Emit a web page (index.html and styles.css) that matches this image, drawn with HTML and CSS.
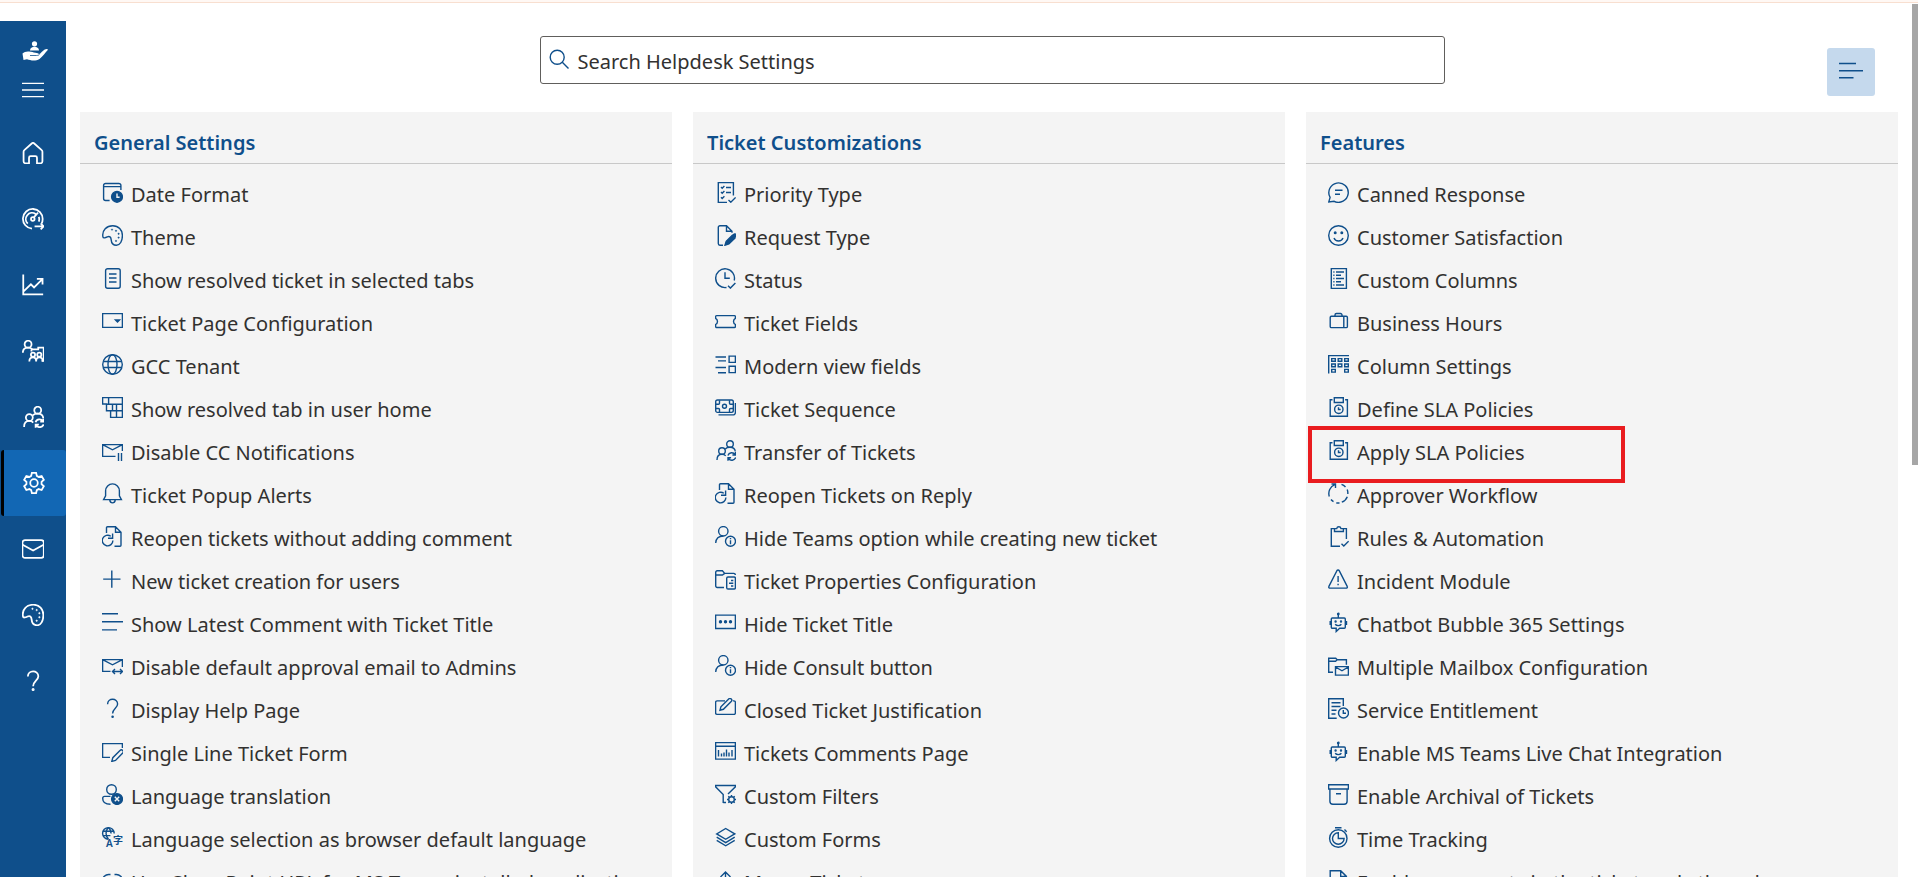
FILE: index.html
```html
<!DOCTYPE html>
<html lang="en">
<head>
<meta charset="utf-8">
<title>Helpdesk Settings</title>
<link rel="stylesheet" href="styles.css">
</head>
<body>
<svg class="sprite" aria-hidden="true">
  <symbol id="date" viewBox="0 0 21 21"><path d="M18.9 8V3.5a2 2 0 0 0-2-2H3.6a2 2 0 0 0-2 2v13a2 2 0 0 0 2 2h4M1.6 4.6h17.3"/><circle class="solid" cx="15" cy="14.8" r="5.4"/><path class="knock" d="M15 11.5v3.7h2.6"/></symbol>
  <symbol id="palette" viewBox="0 0 21 21"><path d="M.9 11.8C-.2 5 4.8.7 10.8.7c5.7 0 9.6 4.3 9.6 9.8 0 5.6-2.4 9.8-6 9.8-3.8 0-5-2.600-5.200-5.400-.2-3-1.700-4-3.900-3-1.800.9-4.100 1.700-4.400-.1z"/><g class="solid dots"><circle cx="10" cy="4.600" r=".7"/><circle cx="14" cy="5.800" r=".7"/><circle cx="16.600" cy="8.800" r=".7"/><circle cx="16.600" cy="12.600" r=".7"/><circle cx="14" cy="15.900" r=".7"/></g></symbol>
  <symbol id="doc" viewBox="0 0 21 21"><rect x="3.600" y=".7" width="14.600" height="19.600" rx="2"/><path d="M7 6h7.500M7 10h7.500M7 14h7.500"/></symbol>
  <symbol id="dropdown" viewBox="0 0 21 21"><path d="M.6 2.600h19.800v13.800H.6z"/><path class="solid" d="M13.500 9h4l-2 2z"/></symbol>
  <symbol id="globe" viewBox="0 0 21 21"><circle cx="10.500" cy="10.500" r="9.800"/><ellipse cx="10.500" cy="10.500" rx="4.500" ry="9.800"/><path d="M1.400 7.500h18.200M1.400 13.500h18.200"/></symbol>
  <symbol id="bricks" viewBox="0 0 21 21"><path d="M.6.6h19.800v19.800H8.600v-6.600H4.500V7H.6zM4.500 7.200h15.900M8.600 13.800h11.800M6.600.6v6.600M10.500 7.200v6.600M14.500 7.200v6.600M14.500 13.800v6.600"/></symbol>
  <symbol id="mailpause" viewBox="0 0 21 21"><path d="M13.500 16.400H.6V4.600h19.800V11M.6 4.600l9.900 5.200 9.900-5.200M16.500 13v8M19.500 13v8"/></symbol>
  <symbol id="bell" viewBox="0 0 21 21"><path d="M1.600 16.600l2-3.800V7.800a6.900 6.900 0 0 1 13.800 0v5l2 3.800zM7.800 17.200c.4 3.500 5 3.500 5.400 0"/></symbol>
  <symbol id="reopen" viewBox="0 0 21 21"><path d="M4.500 7V1.800a1 1 0 0 1 1-1h8l5.500 5.500v12.900a1 1 0 0 1-1 1h-5.500M13.500.8v5.500H19M8.800 10.300a5.300 5.300 0 1 0 2.100 4.200M10.600 7.500v4.800H6"/></symbol>
  <symbol id="plus" viewBox="0 0 21 21"><path d="M9.800 1.500v17.300M1.200 10.100h17.300"/></symbol>
  <symbol id="lines" viewBox="0 0 21 21"><path d="M0 1.700h16M0 9.700h21M0 17.900h15"/></symbol>
  <symbol id="mailswap" viewBox="0 0 21 21"><path d="M8.500 16.400H.6V4.600h19.800V12M.6 4.600l9.900 5.200 9.900-5.200M10.500 16.500h10M13 14l-2.500 2.500L13 19M18 14l2.500 2.500L18 19"/></symbol>
  <symbol id="help" viewBox="0 0 21 21"><path d="M5.600 6.200c0-6.600 10-6.500 10-.2 0 4-5 4.600-5 9.600"/><circle class="solid" cx="10.600" cy="18.700" r=".6"/></symbol>
  <symbol id="formpen" viewBox="0 0 21 21"><path d="M8 16.400H.6V2.600h19.800V7M9.800 20.400l1-3.700 7.200-7.300a1.900 1.900 0 0 1 2.700 2.700l-7.200 7.300z"/></symbol>
  <symbol id="userx" viewBox="0 0 21 21"><circle cx="9.500" cy="5.500" r="4.800"/><path d="M8.500 12.400H2.600c-1.200 0-1.900.8-1.900 2 0 3.300 2.700 5.800 7.800 5.800"/><circle class="solid" cx="15" cy="15" r="5.400"/><path class="knock" d="M12.800 12.800l4.400 4.400M17.200 12.800l-4.400 4.400"/></symbol>
  <symbol id="link" viewBox="0 0 21 21"><path d="M8.500 4.500H6.600a6 6 0 0 0 0 12h1.900M12.500 4.500h1.900a6 6 0 0 1 0 12h-1.900M6 10.500h9"/></symbol>

  <symbol id="checklist" viewBox="0 0 21 21"><path d="M18.400 13.500V.6H3.300v19.800H12M11 5.500h5M11 10.500h5M6 5l1.200 1.200L9.400 4M6 10l1.200 1.200L9.400 9M6 15.200l1.200 1.200 2.200-2.200M13.500 18l2.300 2.200 4.800-4.800"/></symbol>
  <symbol id="docpen" viewBox="0 0 21 21"><path d="M8 20.200H4.900a1.600 1.600 0 0 1-1.600-1.600V2.300A1.600 1.600 0 0 1 4.900.7h6.600l5.500 5.500v1.600M11.500.7v5.500H17"/><path class="solid" d="M10 20.200l1.200-3.900 5.900-5.700 2.700 2.700-5.900 5.700zM18.200 9.800l.6-.5a1.400 1.400 0 0 1 2 2l-.5.600z"/></symbol>
  <symbol id="status" viewBox="0 0 21 21"><path d="M19.200 12.500A9.400 9.400 0 1 0 11.500 19.500M10 4.300v5.900h4.800M13 17.800l2.400 2.300 5-5"/></symbol>
  <symbol id="ticket" viewBox="0 0 21 21"><path d="M1.600 4.600h17.800a1 1 0 0 1 1 1v1.700c-2.500 1.500-2.500 4.700 0 6.200v2a1 1 0 0 1-1 1H1.600a1 1 0 0 1-1-1v-2c2.500-1.500 2.500-4.700 0-6.200V5.600a1 1 0 0 1 1-1z"/></symbol>
  <symbol id="modern" viewBox="0 0 21 21"><path d="M.5 3h10.500M3 6.900h8M.5 13.500h10.500M3 18.800h8M14.100 2.100h6.300v6.300h-6.300zM14.100 12.300h6.300v6.300h-6.300z"/></symbol>
  <symbol id="money" viewBox="0 0 21 21"><rect x=".7" y="3" width="17.600" height="12.400" rx="1.800"/><circle cx="9.500" cy="9.200" r="2"/><path d="M1 7.200h2.500a1 1 0 0 0 1-1V3.300M18 7.200h-2.500a1 1 0 0 1-1-1V3.300M1 11.500h2.500a1 1 0 0 1 1 1v2.800M18 11.500h-2.500a1 1 0 0 0-1 1v2.800M20.400 6v9.500a2.400 2.400 0 0 1-2.400 2.400H3.500"/></symbol>
  <symbol id="transfer" viewBox="0 0 21 21"><circle cx="15" cy="4" r="3.300"/><circle cx="7" cy="11" r="3.300"/><path d="M2 20c0-3.500 2-5.700 5-5.700 1.700 0 2.900.6 3.700 1.600M10.300 9c1-1.200 2.500-1.700 4.700-1.700 3.200 0 5 1.600 5.300 4.200M12.900 15.500a4 4 0 0 1 7.200-.8M20.500 12v3h-3.100M20.700 17.500a4 4 0 0 1-7.200.8M13 20.700v-3h3.100"/></symbol>
  <symbol id="userinfo" viewBox="0 0 21 21"><circle cx="8.300" cy="5.300" r="4.700"/><path d="M.7 17c.3-4.500 3.300-7 7.600-7"/><circle cx="15.500" cy="15.300" r="5"/><path d="M15.500 14.300v4M15.500 12v1.200"/></symbol>
  <symbol id="foldernote" viewBox="0 0 21 21"><path d="M9 18.500H2.200a1.500 1.500 0 0 1-1.500-1.500V3.300a1.500 1.500 0 0 1 1.500-1.500h5.200l2.300 2.600h9a1.500 1.500 0 0 1 1.600 1.500M.7 6h6.700l2.300-1.600"/><rect x="11.700" y="8" width="8.700" height="12" rx="1.300"/><path d="M16 11.500h2.300M14 14.300h4.300M16 17h2.300"/></symbol>
  <symbol id="titledots" viewBox="0 0 21 21"><path d="M.6 3.100h19.800v13.400H.6z"/><g class="solid"><circle cx="5.500" cy="9.800" r="1"/><circle cx="10.500" cy="9.800" r="1"/><circle cx="15.500" cy="9.800" r="1"/></g></symbol>
  <symbol id="closedpen" viewBox="0 0 21 21"><path d="M10 2.900H2.100A1.500 1.500 0 0 0 .6 4.400v10.500a1.500 1.500 0 0 0 1.500 1.500h16.800a1.500 1.500 0 0 0 1.500-1.500V4.400a1.500 1.500 0 0 0-1.500-1.500h-1M5 12.200l.9-3.400L13.700 1a1.700 1.700 0 0 1 2.500 2.500l-7.800 7.800z"/></symbol>
  <symbol id="chartpage" viewBox="0 0 21 21"><path d="M.6 1.600h19.800v16.500H.6zM.6 5.300h19.800M3.500 9v6.500M6.500 12.500v3M9 11.500v4M11.500 8.500v7M14 11.500v4M17 9v6.500"/></symbol>
  <symbol id="filter" viewBox="0 0 21 21"><path d="M8.200 19V10.500L.6 2.800V1.500h19.800v1.300L13 10M8.200 18.500H11"/><circle cx="16.500" cy="15.500" r="2.800"/><path d="M16.500 11v1.700M16.500 18.300V20M12 15.500h1.700M19.300 15.500H21M13.300 12.300l1.200 1.200M18.500 17.500l1.200 1.200M19.700 12.300l-1.200 1.200M14.500 17.500l-1.200 1.200"/></symbol>
  <symbol id="layers" viewBox="0 0 21 21"><path d="M10.700 1.500l9 5.400-9 5.400-9-5.400zM1.700 10.200l9 5.400 9-5.400M1.700 13.400l9 5.400 9-5.400"/></symbol>
  <symbol id="merge" viewBox="0 0 21 21"><path d="M10.500 2v18M5.500 7l5-5 5 5"/></symbol>

  <symbol id="chat" viewBox="0 0 21 21"><path d="M.8 19.900l1.300-4.500A9.700 9.700 0 1 1 6.200 19.300zM7 8.300h7.500M7 12.200h5"/></symbol>
  <symbol id="smile" viewBox="0 0 21 21"><circle cx="10.500" cy="10.500" r="9.800"/><path d="M6 13c1.500 4 7.500 4 9 0"/><circle class="solid" cx="7.200" cy="7.800" r=".8"/><circle class="solid" cx="13.800" cy="7.800" r=".8"/></symbol>
  <symbol id="columns" viewBox="0 0 21 21"><path d="M3.300.6h15.100v19.800H3.300zM8 4h8M8 7.300h5M8 10.500h8M8 13.700h5M8 17h8M5.300 4h1.200M5.300 7.300h1.200M5.300 10.500h1.200M5.300 13.700h1.200M5.300 17h1.200"/></symbol>
  <symbol id="briefcase" viewBox="0 0 21 21"><rect x="2.200" y="5.200" width="17.200" height="11.400" rx="1.200"/><path d="M7 5V4a1.500 1.500 0 0 1 1.500-1.500h4A1.500 1.500 0 0 1 14 4v1M15.800 5.200v11.400"/></symbol>
  <symbol id="colset" viewBox="0 0 21 21"><path d="M.7 19.500V1.600H21M3.700 4.600h3.600v2.700H3.700zM10.200 4.600h3.600v2.700h-3.600zM16.700 4.600h3.600v2.700h-3.600zM3.700 10h3.600v2.700H3.700zM10.200 10h3.600v2.700h-3.600zM16.700 10h3.600v2.700h-3.600zM3.700 15.400h3.600v2.700H3.700zM16.700 15.400h3.600v2.700h-3.600z"/></symbol>
  <symbol id="sla" viewBox="0 0 21 21"><path d="M4.500 2.700H2.200v16.600h17.200V2.700h-2.300M6.300.7h9v4.800h-9z"/><circle cx="10.800" cy="12.300" r="4.200"/><path d="M10.500 10.200v2.300h2.200"/></symbol>
  <symbol id="workflow" viewBox="0 0 21 21"><path d="M1.300 13.500A9.600 9.600 0 0 1 6.700 1.700M3.500 1h4v4M13.500 1.400a9.600 9.600 0 0 1 4 2.600M19.200 6.500a9.600 9.600 0 0 1 .6 4.500M19.300 13.700a9.600 9.600 0 0 1-5.500 5.500M11.500 20H8.300M5.500 18.700A9.600 9.600 0 0 1 3 16.500"/></symbol>
  <symbol id="clipcheck" viewBox="0 0 21 21"><path d="M6 2.600H3.300v17.600H12M16 2.600h2.400V13M6.500 2.600h2.200c.5-2.500 3.800-2.500 4.300 0h2.400v2.900H6.500zM13.500 17.700l2.300 2.300 4.800-4.800"/></symbol>
  <symbol id="warn" viewBox="0 0 21 21"><path d="M8.900 1.700a1.300 1.300 0 0 1 2.300 0l8 15.600a1.200 1.200 0 0 1-1.100 1.800H2a1.200 1.200 0 0 1-1.100-1.800zM10.100 7v6M10.100 14.700v1.500"/></symbol>
  <symbol id="bot" viewBox="0 0 21 21"><path d="M10.300 2v4M4.300 6h12a1 1 0 0 1 1 1v8.300a1 1 0 0 1-1 1h-4.600l-3.500 3.200v-3.200H4.300a1 1 0 0 1-1-1V7a1 1 0 0 1 1-1zM7.200 12.300c1.500 1.800 4.700 1.800 6.200 0M2.200 9v4M18.500 9v4"/><circle class="solid" cx="10.300" cy="2" r=".7"/><circle class="solid" cx="7.600" cy="9.500" r=".5"/><circle class="solid" cx="13" cy="9.500" r=".5"/></symbol>
  <symbol id="foldermail" viewBox="0 0 21 21"><path d="M5 17.300H.7V3.200h7l1.500 1.600h9.200v5M.7 6.200h6.900l1.600-1.400M7.500 11.600h12.900v8.500H7.500zM7.500 12l6.500 3.800 6.400-3.800"/></symbol>
  <symbol id="service" viewBox="0 0 21 21"><path d="M15.300 8V.7H.7v19.600h8M3.500 4.700h9M3.500 8.500h9M3.500 12.300h5M3.500 16h4"/><circle cx="15.500" cy="15" r="5"/><path d="M15.300 12v3.200h2.700"/></symbol>
  <symbol id="archive" viewBox="0 0 21 21"><path d="M.6.700h19.800v4.300H.6zM1.900 5v12.300a3 3 0 0 0 3 3h11.200a3 3 0 0 0 3-3V5M8 9.700h5"/></symbol>
  <symbol id="timer" viewBox="0 0 21 21"><circle cx="10.300" cy="11.500" r="8.700"/><path d="M7 .7h6.500M16.500 2.500l2.200 2.200M10.300 5.700a5.800 5.800 0 1 0 5.800 5.800h-5.800z"/></symbol>
  <symbol id="docfold" viewBox="0 0 21 21"><path d="M2.200 20.400V.7h10.500l5.700 5.700v14zM12.700.7v5.700h5.700"/></symbol>

  <symbol id="home" viewBox="0 0 21 21"><path d="M1.500 9.300a2 2 0 0 1 .7-1.500L9.300 1.400a1.800 1.800 0 0 1 2.400 0l7.100 6.400a2 2 0 0 1 .7 1.500v9a2 2 0 0 1-2 2h-3.200V15a1.500 1.500 0 0 0-1.500-1.500H8.200A1.500 1.500 0 0 0 6.700 15v5.300H3.500a2 2 0 0 1-2-2z"/></symbol>
  <symbol id="gauge" viewBox="0 0 21 21"><path d="M9.500 19.700A9.400 9.400 0 1 1 19.700 10.500a9 9 0 0 1-.9 4.200M5.500 15a6 6 0 0 1 7.500-9.300M16 8.500a6 6 0 0 1 0 4.500M11.300 9l4-4.500"/><circle cx="10.300" cy="10.500" r="1.700"/><path d="M12 17.500h8.500M17.800 14.700l2.800 2.800-2.800 2.800"/></symbol>
  <symbol id="trend" viewBox="0 0 21 21"><path d="M1.200.5v18.900h19M1.500 16.500l7-6.700 3 3 8-8M14.200 4.700h5.400v5.400"/></symbol>
  <symbol id="team" viewBox="0 0 21 21"><circle cx="5.800" cy="4" r="3.300"/><path d="M.8 12.200c0-3.200 2-4.900 5-4.900 1.700 0 3 .5 4 1.500M9 11V9h6.500V7.300h5.200V20h-2"/><circle cx="10.500" cy="14" r="2"/><circle cx="16.500" cy="14" r="2"/><path d="M7 20.500c0-2.700 1.200-4 3.500-4s3 1.500 3 4c0-2.700 1-4 3-4s3.300 1.300 3.300 4"/></symbol>
  <symbol id="gear" viewBox="0 0 21 21"><circle cx="10.500" cy="10.500" r="3.600"/><path d="M8.500.8h4l.7 2.900 1.700 1 2.900-.9 2.100 3.600-2.200 2.100v2l2.200 2.100-2.100 3.600-2.900-.9-1.700 1-.7 2.900h-4l-.7-2.900-1.700-1-2.900.9-2.100-3.600 2.200-2.100v-2L1.100 7.400l2.100-3.600 2.900.9 1.700-1z"/></symbol>
  <symbol id="mail" viewBox="0 0 21 21"><rect x=".4" y="2" width="20.400" height="17" rx="2.500"/><path d="M.6 6.500l10 5.500 10-5.500"/></symbol>
  <symbol id="menu" viewBox="0 0 21 21"><path d="M0 4.200h21M0 10.500h21M0 16.800h21"/></symbol>
  <symbol id="search" viewBox="0 0 21 21"><circle cx="8.200" cy="8.200" r="7"/><path d="M13.300 13.300l6.200 6.200"/></symbol>
  <symbol id="brand" viewBox="0 0 26 20"><g class="solid"><circle cx="12.500" cy="2.800" r="2.600"/><path d="M8 9.500c0-5 9-5 9 0z"/><path d="M.5 12.500c1.500-1.500 4-2.300 6.500-2 3 .2 4 1 6.500 1.200 1.800.2 3.500.6 3.200 1.600 2.300-.8 3.700-3.500 6-4.800 1.500-.8 3-.7 3.300.2-2.800 2.800-5 6.500-8.500 9.300-4 2.500-9 1.500-12.500.3L1.500 19z"/></g><path class="groove" d="M8 14.500h6.500c1.500 0 2.500-.5 3-1"/></symbol>
</svg>

<div class="page">
  <div class="notice"></div>
  <div class="shell">
    <nav class="rail" aria-label="Main">
      <div class="rail-top">
        <svg class="brand"><use href="#brand"/></svg>
        <button class="menu" type="button" aria-label="Menu"><svg class="ic"><use href="#menu"/></svg></button>
      </div>
      <a class="rail-item" href="#" aria-label="Home"><svg class="ic"><use href="#home"/></svg></a>
      <a class="rail-item" href="#" aria-label="Dashboard"><svg class="ic"><use href="#gauge"/></svg></a>
      <a class="rail-item" href="#" aria-label="Reports"><svg class="ic"><use href="#trend"/></svg></a>
      <a class="rail-item" href="#" aria-label="Teams"><svg class="ic"><use href="#team"/></svg></a>
      <a class="rail-item" href="#" aria-label="Users"><svg class="ic"><use href="#transfer"/></svg></a>
      <a class="rail-item active" href="#" aria-label="Settings" aria-current="page"><svg class="ic"><use href="#gear"/></svg></a>
      <a class="rail-item" href="#" aria-label="Email"><svg class="ic"><use href="#mail"/></svg></a>
      <a class="rail-item" href="#" aria-label="Theme"><svg class="ic"><use href="#palette"/></svg></a>
      <a class="rail-item" href="#" aria-label="Help"><svg class="ic"><use href="#help"/></svg></a>
    </nav>

    <main class="main">
      <header class="toolbar">
        <label class="search"><svg class="ic"><use href="#search"/></svg><input type="text" placeholder="Search Helpdesk Settings" aria-label="Search Helpdesk Settings"></label>
        <button class="toggle" type="button" aria-label="Toggle list view"><svg viewBox="0 0 24 17"><path d="M0 1.500h17M0 8.700h24M0 15.700h14.500"/></svg></button>
      </header>

      <div class="columns">
        <section class="card">
          <h2>General Settings</h2>
          <ul>
            <li><a href="#"><svg class="ic"><use href="#date"/></svg>Date Format</a></li>
            <li><a href="#"><svg class="ic"><use href="#palette"/></svg>Theme</a></li>
            <li><a href="#"><svg class="ic"><use href="#doc"/></svg>Show resolved ticket in selected tabs</a></li>
            <li><a href="#"><svg class="ic"><use href="#dropdown"/></svg>Ticket Page Configuration</a></li>
            <li><a href="#"><svg class="ic"><use href="#globe"/></svg>GCC Tenant</a></li>
            <li><a href="#"><svg class="ic"><use href="#bricks"/></svg>Show resolved tab in user home</a></li>
            <li><a href="#"><svg class="ic"><use href="#mailpause"/></svg>Disable CC Notifications</a></li>
            <li><a href="#"><svg class="ic"><use href="#bell"/></svg>Ticket Popup Alerts</a></li>
            <li><a href="#"><svg class="ic"><use href="#reopen"/></svg>Reopen tickets without adding comment</a></li>
            <li><a href="#"><svg class="ic"><use href="#plus"/></svg>New ticket creation for users</a></li>
            <li><a href="#"><svg class="ic"><use href="#lines"/></svg>Show Latest Comment with Ticket Title</a></li>
            <li><a href="#"><svg class="ic"><use href="#mailswap"/></svg>Disable default approval email to Admins</a></li>
            <li><a href="#"><svg class="ic"><use href="#help"/></svg>Display Help Page</a></li>
            <li><a href="#"><svg class="ic"><use href="#formpen"/></svg>Single Line Ticket Form</a></li>
            <li><a href="#"><svg class="ic"><use href="#userx"/></svg>Language translation</a></li>
            <li><a href="#"><svg class="ic" viewBox="0 0 21 21" aria-hidden="true"><path d="M6.500 12.200A5.800 5.800 0 1 1 12.200 6.400M6.500.6c-3.300 3-3.300 8.400 0 11.400M6.500.6c1.700 1.600 2.600 3.600 2.600 5.800M1.400 4.200h10.200M1.400 8.600h7"/><text x="4" y="20">A</text><text x="11" y="17">字</text></svg>Language selection as browser default language</a></li>
            <li><a href="#"><svg class="ic"><use href="#link"/></svg>Use SharePoint URL for MS Teams installed application</a></li>
          </ul>
        </section>

        <section class="card">
          <h2>Ticket Customizations</h2>
          <ul>
            <li><a href="#"><svg class="ic"><use href="#checklist"/></svg>Priority Type</a></li>
            <li><a href="#"><svg class="ic"><use href="#docpen"/></svg>Request Type</a></li>
            <li><a href="#"><svg class="ic"><use href="#status"/></svg>Status</a></li>
            <li><a href="#"><svg class="ic"><use href="#ticket"/></svg>Ticket Fields</a></li>
            <li><a href="#"><svg class="ic"><use href="#modern"/></svg>Modern view fields</a></li>
            <li><a href="#"><svg class="ic"><use href="#money"/></svg>Ticket Sequence</a></li>
            <li><a href="#"><svg class="ic"><use href="#transfer"/></svg>Transfer of Tickets</a></li>
            <li><a href="#"><svg class="ic"><use href="#reopen"/></svg>Reopen Tickets on Reply</a></li>
            <li><a href="#"><svg class="ic"><use href="#userinfo"/></svg>Hide Teams option while creating new ticket</a></li>
            <li><a href="#"><svg class="ic"><use href="#foldernote"/></svg>Ticket Properties Configuration</a></li>
            <li><a href="#"><svg class="ic"><use href="#titledots"/></svg>Hide Ticket Title</a></li>
            <li><a href="#"><svg class="ic"><use href="#userinfo"/></svg>Hide Consult button</a></li>
            <li><a href="#"><svg class="ic"><use href="#closedpen"/></svg>Closed Ticket Justification</a></li>
            <li><a href="#"><svg class="ic"><use href="#chartpage"/></svg>Tickets Comments Page</a></li>
            <li><a href="#"><svg class="ic"><use href="#filter"/></svg>Custom Filters</a></li>
            <li><a href="#"><svg class="ic"><use href="#layers"/></svg>Custom Forms</a></li>
            <li><a href="#"><svg class="ic"><use href="#merge"/></svg>Merge Tickets</a></li>
          </ul>
        </section>

        <section class="card">
          <h2>Features</h2>
          <ul>
            <li><a href="#"><svg class="ic"><use href="#chat"/></svg>Canned Response</a></li>
            <li><a href="#"><svg class="ic"><use href="#smile"/></svg>Customer Satisfaction</a></li>
            <li><a href="#"><svg class="ic"><use href="#columns"/></svg>Custom Columns</a></li>
            <li><a href="#"><svg class="ic"><use href="#briefcase"/></svg>Business Hours</a></li>
            <li><a href="#"><svg class="ic"><use href="#colset"/></svg>Column Settings</a></li>
            <li><a href="#"><svg class="ic"><use href="#sla"/></svg>Define SLA Policies</a></li>
            <li class="marked"><a href="#"><svg class="ic"><use href="#sla"/></svg>Apply SLA Policies</a></li>
            <li><a href="#"><svg class="ic"><use href="#workflow"/></svg>Approver Workflow</a></li>
            <li><a href="#"><svg class="ic"><use href="#clipcheck"/></svg>Rules &amp; Automation</a></li>
            <li><a href="#"><svg class="ic"><use href="#warn"/></svg>Incident Module</a></li>
            <li><a href="#"><svg class="ic"><use href="#bot"/></svg>Chatbot Bubble 365 Settings</a></li>
            <li><a href="#"><svg class="ic"><use href="#foldermail"/></svg>Multiple Mailbox Configuration</a></li>
            <li><a href="#"><svg class="ic"><use href="#service"/></svg>Service Entitlement</a></li>
            <li><a href="#"><svg class="ic"><use href="#bot"/></svg>Enable MS Teams Live Chat Integration</a></li>
            <li><a href="#"><svg class="ic"><use href="#archive"/></svg>Enable Archival of Tickets</a></li>
            <li><a href="#"><svg class="ic"><use href="#timer"/></svg>Time Tracking</a></li>
            <li><a href="#"><svg class="ic"><use href="#docfold"/></svg>Enable comments in the ticket reply thread</a></li>
          </ul>
        </section>
      </div>
      <div class="thumb"></div>
    </main>
  </div>
</div>
</body>
</html>
```
FILE: styles.css
```css
*, *::after { box-sizing: border-box; }

body {
  margin: 0;
  background: #fff;
  color: #323130;
  font-family: "Segoe UI", "Noto Sans", "Open Sans", "Noto Sans CJK SC", sans-serif;
  font-size: 20px;
}

a { color: inherit; text-decoration: none; }
button { border: 0; padding: 0; background: none; cursor: pointer; }

.sprite { position: absolute; width: 0; height: 0; }

.page {
  display: flex;
  flex-direction: column;
  height: 100vh;
  overflow: hidden;
}

.notice {
  flex: none;
  height: 3px;
  background: #fff8f4;
  border-bottom: 1px solid #f8dfd0;
}

.shell { display: flex; flex: 1; min-height: 0; }

.ic {
  flex: none;
  width: 21px;
  height: 21px;
  overflow: visible;
  fill: none;
  stroke: currentColor;
  stroke-width: 1.4;
}
.solid { fill: currentColor; }
.knock { stroke: #f4f4f4; stroke-width: 1.4; }
.dots { stroke-width: .5; }
.ic text {
  fill: currentColor;
  stroke: none;
  font-size: 10px;
  font-weight: 600;
}

/* Left navigation rail */
.rail {
  flex: none;
  width: 66px;
  margin-top: 18px;
  background: #0f4f8b;
  color: #fff;
}
.rail .ic { width: 22px; height: 22px; stroke-width: 1.7; }
.rail-top {
  display: flex;
  flex-direction: column;
  align-items: center;
  gap: 18px;
  height: 99px;
  padding-top: 20px;
}
.brand { width: 26px; height: 20px; margin-left: 4px; }
.groove { fill: none; stroke: #0f4f8b; stroke-width: .8; }
.menu { display: flex; color: #fff; }
.rail .menu .ic { stroke-width: 1.3; }
.rail-item {
  display: flex;
  align-items: center;
  justify-content: center;
  height: 66px;
}
.rail-item.active {
  margin-left: 1px;
  padding-right: 2px;
  border-left: 3px solid #000;
  border-radius: 3px;
  background: #1267b4;
}

/* Content */
.main {
  position: relative;
  flex: 1;
  min-width: 0;
  overflow: hidden;
}

.toolbar {
  display: grid;
  grid-template-columns: 1fr minmax(0, 905px) 1fr;
  align-items: start;
  padding: 33px 0 16px;
}
.search {
  grid-column: 2;
  display: flex;
  align-items: center;
  gap: 8px;
  height: 48px;
  padding: 2px 8px 0;
  border: 1px solid #605e5c;
  border-radius: 3px;
}
.search .ic { color: #0f4f8b; margin-bottom: 4px; }
.search input {
  flex: 1;
  min-width: 0;
  border: 0;
  padding: 0;
  outline: 0;
  background: none;
  color: #323130;
  font: inherit;
}
.search input::placeholder { color: #323130; opacity: 1; }
.toggle {
  display: flex;
  align-items: center;
  justify-content: center;
  justify-self: end;
  width: 48px;
  height: 48px;
  margin: 12px 43px 0 0;
  padding-bottom: 3px;
  border-radius: 3px;
  background: #c5d9ed;
  color: #0f4f8b;
}
.toggle svg { width: 24px; height: 17px; stroke: currentColor; stroke-width: 1.6; }

.columns {
  display: grid;
  grid-template-columns: repeat(3, 1fr);
  gap: 21px;
  padding: 0 20px 0 14px;
}
.card { min-width: 0; background: #f4f4f4; }
.card h2 {
  margin: 0;
  padding: 17px 14px 6px;
  border-bottom: 1px solid #c8c8c8;
  color: #0f4f8b;
  font-size: 20px;
  font-weight: 600;
  line-height: 28px;
}
.card ul { margin: 0; padding: 9px 22px; list-style: none; }
.card li { position: relative; }
.card a {
  display: flex;
  align-items: center;
  gap: 8px;
  height: 43px;
  white-space: nowrap;
}
.card .ic { margin-bottom: 4px; color: #0f4f8b; }

/* Highlight frame around one setting */
.marked::after {
  content: "";
  position: absolute;
  top: -5px;
  left: -20px;
  width: 317px;
  height: 57px;
  border: 4px solid #e91c1f;
  pointer-events: none;
}

.thumb {
  position: absolute;
  top: 1px;
  right: 0;
  width: 6px;
  height: 461px;
  background: #a6a6a6;
}
```
